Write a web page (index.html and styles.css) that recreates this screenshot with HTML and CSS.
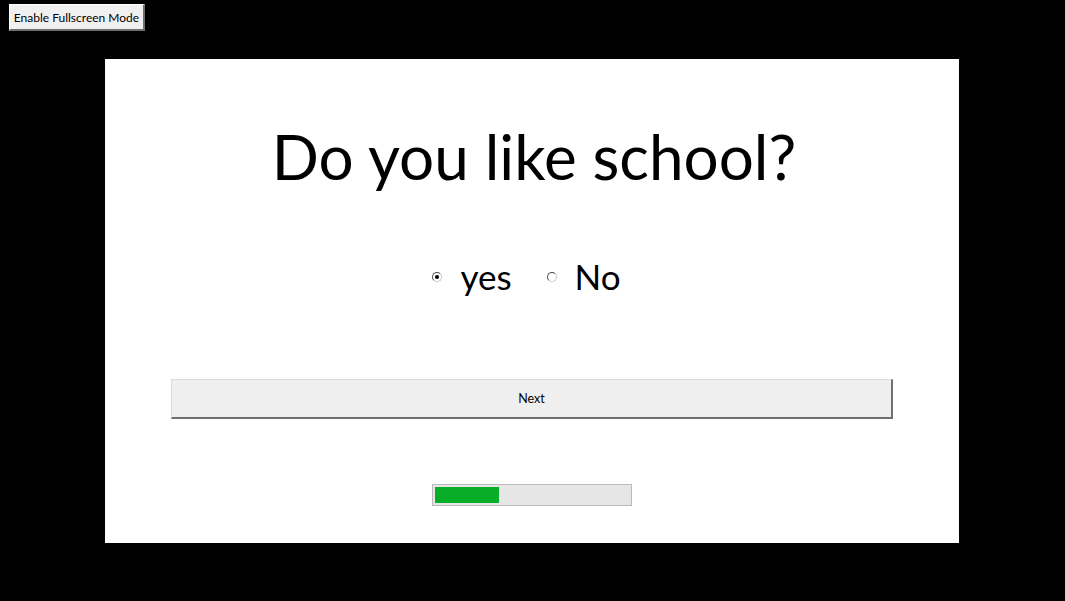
FILE: index.html
```html
<!DOCTYPE html>
<html>
<head>
<meta charset="utf-8">
<link rel="stylesheet" href="styles.css">
</head>
<body>
<div class="topbar">
  <button class="fs-btn">Enable Fullscreen Mode</button>
</div>
<main class="panel">
  <h1 class="question">Do you like school?</h1>
  <div class="options">
    <label class="option"><span class="radio checked"></span><span class="opt-text">yes</span></label>
    <label class="option"><span class="radio"></span><span class="opt-text">No</span></label>
  </div>
  <button class="next-btn">Next</button>
  <div class="progress"><div class="progress-fill" style="width:64px"></div></div>
</main>
</body>
</html>
```
FILE: styles.css
```css
html, body {
  margin: 0;
  padding: 0;
  background: #000;
  height: 601px;
  overflow: hidden;
}
body {
  font-family: "Lato", "Open Sans", sans-serif;
}
.topbar {
  height: 59px;
  padding: 4px 0 0 9px;
  box-sizing: border-box;
}
.fs-btn {
  display: block;
  width: 136px;
  height: 27px;
  padding: 0;
  margin: 0;
  background: #f0f0f0;
  border-style: solid;
  border-width: 1px 2px 2px 1px;
  border-color: #fff #6f6f6f #6f6f6f #fff;
  font-family: "Lato", sans-serif;
  font-size: 12px;
  color: #000;
}
.panel {
  width: 854px;
  height: 484px;
  margin: 0 0 0 105px;
  background: #fff;
  display: flex;
  flex-direction: column;
  align-items: center;
  box-sizing: border-box;
  padding-top: 66px;
}
.question {
  margin: 0;
  font-weight: 400;
  font-size: 62px;
  line-height: 1;
  color: #000;
  padding-left: 4px;
}
.options {
  display: flex;
  gap: 35px;
  margin-top: 72px;
  padding-right: 11px;
}
.option {
  display: flex;
  align-items: center;
}
.radio {
  width: 10px;
  height: 10px;
  border-radius: 50%;
  border: 1px solid;
  border-color: #4a4a4a #c8c8c8 #c8c8c8 #4a4a4a;
  box-sizing: border-box;
  position: relative;
  margin-right: 18px;
}
.radio.checked::after {
  content: "";
  position: absolute;
  left: 2px;
  top: 2px;
  width: 4px;
  height: 4px;
  border-radius: 50%;
  background: #000;
}
.opt-text {
  font-size: 35px;
  line-height: 1;
}
.next-btn {
  margin-top: 85px;
  width: 722px;
  height: 40px;
  background: #efefef;
  border-style: solid;
  border-width: 1px 2px 2px 1px;
  border-color: #dcdcdc #6f6f6f #6f6f6f #dcdcdc;
  font-family: "Lato", sans-serif;
  font-size: 12.5px;
  color: #000;
}
.progress {
  margin-top: 65px;
  width: 200px;
  height: 22px;
  box-sizing: border-box;
  border: 1px solid #bbbbbb;
  background: #e6e6e6;
  padding: 2px;
}
.progress-fill {
  height: 16px;
  background: #08ae28;
}
```
